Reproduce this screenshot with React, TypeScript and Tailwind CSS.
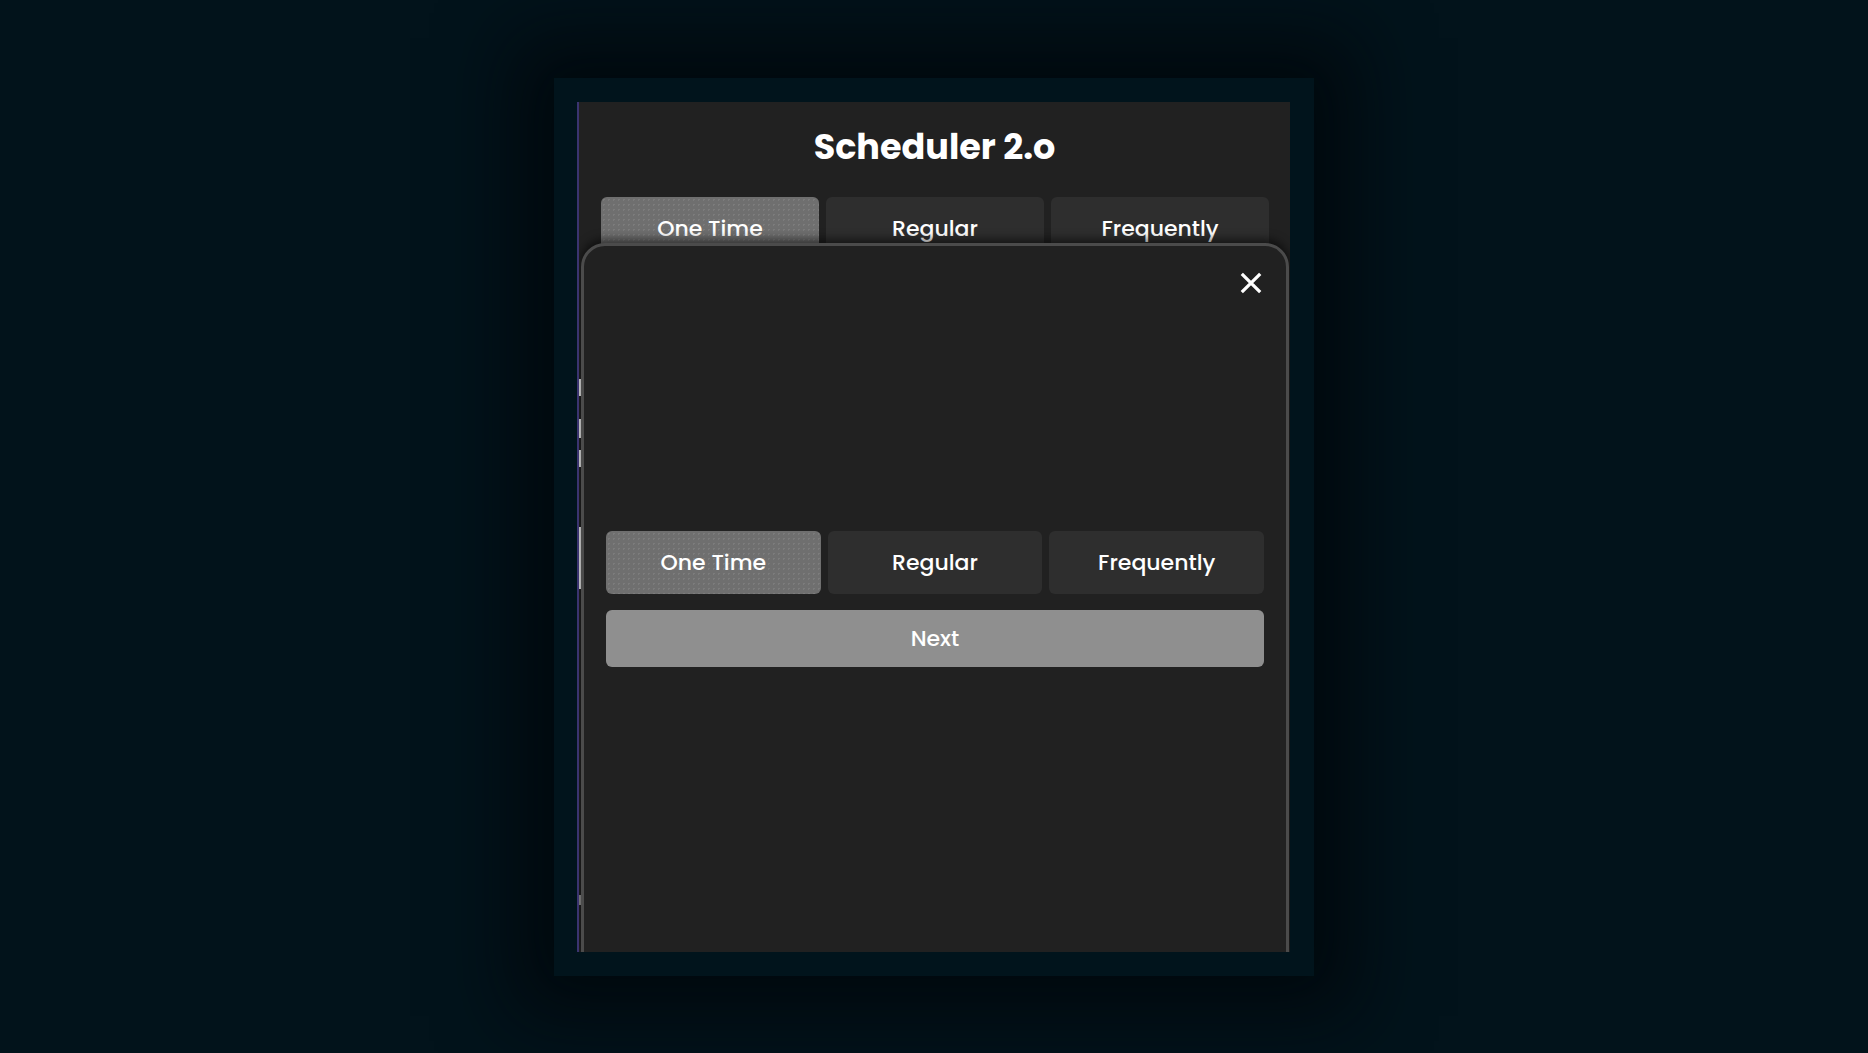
import React, { useState } from "react";

const options = ["One Time", "Regular", "Frequently"];

const font = { fontFamily: "Poppins, Inter, 'Noto Sans', sans-serif" };

const dotted =
  "bg-[radial-gradient(rgba(255,255,255,0.09)_1px,transparent_1px)] bg-[length:5px_5px]";

const OptionButton = ({
  label,
  active,
  onClick,
}: {
  label: string;
  active: boolean;
  onClick: () => void;
}) => {
  return (
    <button
      onClick={onClick}
      className={`h-[63px] rounded-md text-[22px] font-medium text-white ${
        active ? `bg-[#6f6f6f] ${dotted}` : "bg-[#2e2e2e]"
      }`}
    >
      {label}
    </button>
  );
};

export default function App() {
  const [selected, setSelected] = useState("One Time");
  const [picked, setPicked] = useState("One Time");

  return (
    <div
      className="h-[1053px] w-full bg-[#02131b] flex items-center justify-center"
      style={font}
    >
      <div className="w-[760px] h-[898px] bg-[#01141c] pl-[23px] pr-6 py-6 shadow-[0_0_70px_40px_rgba(0,6,10,0.75)]">
        <div className="relative h-full bg-[#212121] border-l-2 border-[#3b3470] overflow-hidden">
          <h1 className="mt-[24px] text-center text-[35px] leading-[42px] font-bold text-white">
            Scheduler 2.o
          </h1>

          <div className="mt-[29px] grid grid-cols-3 gap-[7px] pl-[22px] pr-[21px]">
            {options.map((o) => (
              <OptionButton
                key={o}
                label={o}
                active={selected === o}
                onClick={() => setSelected(o)}
              />
            ))}
          </div>

          {/* list markers peeking out along the left edge */}
          <div className="absolute left-0 top-[277px] flex flex-col w-[2px]">
            <span className="h-[17px] bg-white/90" />
            <span className="mt-[23px] h-[19px] bg-white/90" />
            <span className="mt-[12px] h-[17px] bg-white/90" />
            <span className="mt-[60px] h-[62px] bg-white/90" />
            <span className="mt-[306px] h-[10px] bg-white/50" />
          </div>

          {/* dialog */}
          <div className="absolute left-[2px] right-[1px] top-[141px] h-[712px] rounded-t-[24px] border-[3px] border-[#4b4b4b] bg-[#212121] shadow-[0_-4px_10px_rgba(0,0,0,0.55)] flex flex-col justify-center px-[22px]">
            <button className="absolute right-[22px] top-[24px] text-white">
              <svg width="26" height="26" viewBox="0 0 24 24" fill="none">
                <path
                  d="M3.5 3.5l17 17M20.5 3.5l-17 17"
                  stroke="currentColor"
                  strokeWidth="3"
                />
              </svg>
            </button>

            <div className="grid grid-cols-3 gap-[7px]">
              {options.map((o) => (
                <OptionButton
                  key={o}
                  label={o}
                  active={picked === o}
                  onClick={() => setPicked(o)}
                />
              ))}
            </div>
            <button className="mt-4 h-[57px] w-full rounded-md bg-[#8f8f8f] text-[22px] font-medium text-white">
              Next
            </button>
          </div>
        </div>
      </div>
    </div>
  );
}
